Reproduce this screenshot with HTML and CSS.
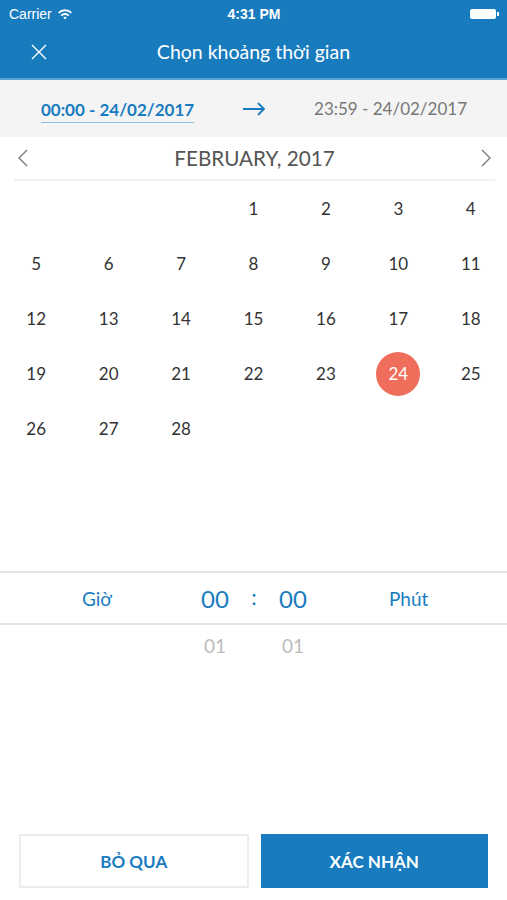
FILE: index.html
```html
<!DOCTYPE html>
<html lang="vi">
<head>
  <meta charset="UTF-8">
  <title>Chọn khoảng thời gian</title>
  <link rel="stylesheet" href="styles.css">
</head>
<body>
  <div class="top">
    <div class="status">
      <div class="carrier">Carrier
        <svg width="16" height="12" viewBox="0 0 16 12"><path d="M1 4.2a10 10 0 0 1 14 0l-1.3 1.4a8 8 0 0 0-11.4 0z M3.6 6.9a6.2 6.2 0 0 1 8.8 0l-1.3 1.4a4.4 4.4 0 0 0-6.2 0z M6.2 9.6a2.5 2.5 0 0 1 3.6 0L8 11.5z" fill="#fff"/></svg>
      </div>
      <div class="clock">4:31 PM</div>
      <div class="battery"><span class="cell"></span><span class="tip"></span></div>
    </div>
    <div class="nav">
      <svg class="close" width="16" height="16" viewBox="0 0 16 16"><path d="M1 1L15 15M15 1L1 15" stroke="#fff" stroke-width="1.4"/></svg>
      <div class="title">Chọn khoảng thời gian</div>
    </div>
  </div>

  <div class="range">
    <span class="from">00:00 - 24/02/2017</span>
    <svg width="24" height="14" viewBox="0 0 24 14"><path d="M1 7H22M16 1L22 7L16 13" stroke="#1a7cc0" stroke-width="1.8" fill="none"/></svg>
    <span class="to">23:59 - 24/02/2017</span>
  </div>

  <div class="month">
    <svg width="10" height="18" viewBox="0 0 10 18"><path d="M9 1L1 9L9 17" stroke="#777" stroke-width="1.3" fill="none"/></svg>
    <span>FEBRUARY, 2017</span>
    <svg width="10" height="18" viewBox="0 0 10 18"><path d="M1 1L9 9L1 17" stroke="#777" stroke-width="1.3" fill="none"/></svg>
  </div>

  <div class="days">
    <div></div><div></div><div></div>
    <div>1</div><div>2</div><div>3</div><div>4</div>
    <div>5</div><div>6</div><div>7</div><div>8</div><div>9</div><div>10</div><div>11</div>
    <div>12</div><div>13</div><div>14</div><div>15</div><div>16</div><div>17</div><div>18</div>
    <div>19</div><div>20</div><div>21</div><div>22</div><div>23</div><div><span class="sel">24</span></div><div>25</div>
    <div>26</div><div>27</div><div>28</div>
  </div>

  <div class="picker">
    <div class="row current">
      <span class="lbl">Giờ</span>
      <span class="num">00</span>
      <span class="colon">:</span>
      <span class="num">00</span>
      <span class="lbl">Phút</span>
    </div>
    <div class="row next">
      <span class="lbl"></span>
      <span class="num">01</span>
      <span class="colon"></span>
      <span class="num">01</span>
      <span class="lbl"></span>
    </div>
  </div>

  <div class="actions">
    <button class="skip">BỎ QUA</button>
    <button class="ok">XÁC NHẬN</button>
  </div>
</body>
</html>
```

FILE: styles.css
```css
body {
  margin: 0;
  width: 507px;
  height: 900px;
  font-family: Lato, "Open Sans", sans-serif;
  background: #fff;
  color: #333;
  overflow: hidden;
}
.top {
  background-color: #177bbe;
  color: #fff;
  border-bottom: 2px solid #5aa5d8;
}
.status {
  height: 27px;
  display: flex;
  align-items: center;
  justify-content: space-between;
  padding: 0 8px 0 9px;
  font-family: "Liberation Sans", Arial, sans-serif;
  font-size: 14px;
}
.carrier {
  display: flex;
  align-items: center;
  gap: 5px;
  width: 100px;
}
.clock {
  font-weight: bold;
}
.battery {
  width: 100px;
  display: flex;
  justify-content: flex-end;
  align-items: center;
}
.battery .cell {
  width: 26px;
  height: 10px;
  background: #fff;
  border-radius: 2px;
}
.battery .tip {
  width: 2px;
  height: 4px;
  background: #fff;
  margin-left: 1px;
}
.nav {
  height: 51px;
  position: relative;
  display: flex;
  align-items: center;
  justify-content: center;
}
.nav .close {
  position: absolute;
  left: 31px;
  top: 17px;
}
.title {
  font-size: 19.5px;
  margin-top: -2px;
}
.range {
  height: 57px;
  background: #f4f4f4;
  display: flex;
  align-items: center;
  justify-content: space-between;
  padding: 0 40px 0 41px;
  font-size: 17px;
}
.range .from {
  color: #1a7cc0;
  font-weight: bold;
  border-bottom: 1px solid #8dbfe2;
  padding-bottom: 2px;
  margin-top: 4px;
}
.range .to {
  color: #777;
}
.month {
  height: 42px;
  margin: 0 12px 0 14px;
  border-bottom: 2px solid #f1f1f1;
  display: flex;
  align-items: center;
  justify-content: space-between;
  padding: 0 4px;
  font-size: 20.7px;
  color: #555;
}
.days {
  display: grid;
  grid-template-columns: repeat(7, 1fr);
  grid-auto-rows: 55px;
  font-size: 17px;
  color: #333;
  height: 390px;
}
.days div {
  display: flex;
  align-items: center;
  justify-content: center;
}
.days .sel {
  width: 44px;
  height: 44px;
  border-radius: 50%;
  background: #ef6e5b;
  color: #fff;
  display: flex;
  align-items: center;
  justify-content: center;
}
.picker .row {
  display: grid;
  grid-template-columns: 194px 42px 36px 42px 1fr;
  align-items: center;
}
.picker .current {
  height: 50px;
  border-top: 2px solid #e3e3e3;
  border-bottom: 2px solid #e3e3e3;
  color: #1a7cc0;
}
.picker .lbl {
  font-size: 19px;
}
.picker .current .lbl:first-child {
  padding-left: 82px;
}
.picker .current .lbl:last-child {
  padding-left: 75px;
}
.picker .num {
  font-size: 24px;
  text-align: center;
}
.picker .colon {
  font-size: 22px;
  text-align: center;
  margin-top: -4px;
}
.picker .next {
  height: 42px;
  color: #bdbdbd;
  align-items: start;
}
.picker .next .num {
  font-size: 19px;
  margin-top: 9px;
}
.actions {
  display: flex;
  gap: 12px;
  padding: 0 19px;
  margin-top: 167px;
}
.actions button {
  flex: 1;
  height: 54px;
  font-family: Lato, sans-serif;
  font-weight: bold;
  font-size: 17px;
  border-radius: 0;
}
.skip {
  background: #fff;
  color: #1a7cc0;
  border: 2px solid #ececec;
}
.ok {
  background: #177bbe;
  color: #fff;
  border: 1px solid #177bbe;
}
```
